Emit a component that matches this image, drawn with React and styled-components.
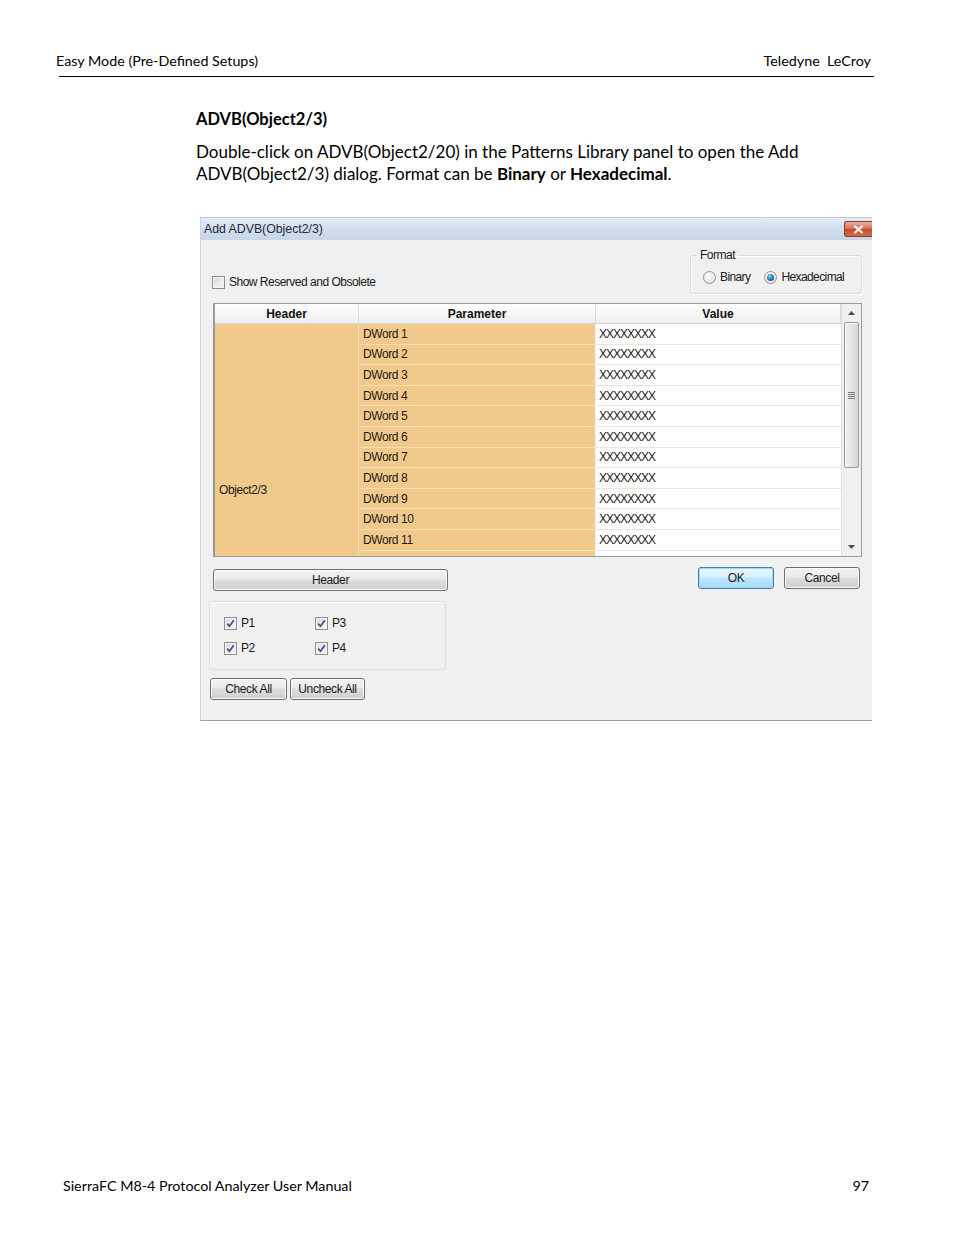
import React from "react";
import styled, { createGlobalStyle } from "styled-components";

const Global = createGlobalStyle`
  html, body { margin: 0; padding: 0; background: #fff; }
  body { font-family: "Lato", "Open Sans", sans-serif; color: #000; }
  * { box-sizing: border-box; }
`;

const Page = styled.div`
  width: 954px;
  min-height: 1235px;
  display: flex;
  flex-direction: column;
`;

const RunningHead = styled.div`
  display: flex;
  justify-content: space-between;
  margin: 52px 83px 0 56px;
  font-size: 14.3px;
  line-height: 18px;
`;

const Rule = styled.div`
  margin: 6px 80px 0 59px;
  border-top: 1px solid #000;
`;

const Content = styled.div`
  margin-left: 196px;
  display: flex;
  flex-direction: column;
`;

const Heading = styled.h2`
  margin: 32px 0 0;
  font-size: 16.5px;
  line-height: 20px;
  font-weight: 700;
`;

const Para = styled.p`
  margin: 12px 0 0;
  font-size: 17px;
  line-height: 22px;
  width: 690px;
`;

const Dialog = styled.div`
  margin: 32px 0 0 4px;
  width: 672px;
  background: #f0f0f0;
  border-bottom: 1px solid #a0a0a0;
  border-left: 1px solid #c8d4e2;
  font-family: "Liberation Sans", Arial, sans-serif;
  font-size: 12px;
  color: #1a1a1a;
`;

const TitleBar = styled.div`
  height: 23px;
  display: flex;
  align-items: flex-start;
  justify-content: space-between;
  background: linear-gradient(#e3ecf7, #cfdcec 60%, #c6d7ea);
  border-top: 1px solid #b9c9dc;
`;

const Title = styled.span`
  margin: 4px 0 0 3px;
  font-size: 12.3px;
  line-height: 14px;
  color: #1e2a3a;
`;

const CloseBtn = styled.div`
  margin-top: 3px;
  width: 28px;
  height: 16px;
  border: 1px solid #8d3a2b;
  border-right: none;
  border-radius: 3px 0 0 3px;
  background: linear-gradient(#eab1a2, #d7735c 45%, #c54b2e 55%, #d36b4c);
  display: flex;
  align-items: center;
  justify-content: center;
`;

const Body = styled.div`
  padding: 8px 10px 20px 11px;
  display: flex;
  flex-direction: column;
`;

const TopRow = styled.div`
  display: flex;
  justify-content: space-between;
  align-items: flex-end;
`;

const CheckLabel = styled.label`
  display: flex;
  align-items: center;
  gap: 4px;
  margin: 0 0 5px 0;
  line-height: 14px;
  letter-spacing: -0.5px;
`;

const Box = styled.span`
  width: 13px;
  height: 13px;
  border: 1px solid #8f8f8f;
  background: linear-gradient(135deg, #dcdcdc, #f6f6f6);
  box-shadow: inset 0 0 0 1px #f4f4f4;
  display: inline-flex;
  align-items: center;
  justify-content: center;
  flex: none;
`;

const Group = styled.fieldset`
  margin: 0;
  padding: 0 10px 9px 12px;
  width: 172px;
  border: 1px solid #d9dfe4;
  border-radius: 3px;
  box-shadow: inset 1px 1px 0 #fff, 1px 1px 0 #fff;
`;

const Legend = styled.legend`
  padding: 0 3px;
  margin-left: -6px;
  font-size: 12px;
  line-height: 14px;
  letter-spacing: -0.5px;
`;

const RadioRow = styled.div`
  display: flex;
  align-items: center;
  gap: 14px;
  margin-top: 8px;
`;

const RadioLabel = styled.label`
  display: flex;
  align-items: center;
  gap: 4px;
  line-height: 14px;
  letter-spacing: -0.6px;
`;

const Radio = styled.span`
  width: 13px;
  height: 13px;
  border-radius: 50%;
  border: 1px solid #939393;
  background: radial-gradient(circle at 40% 35%, #ffffff, #d8d8d8);
  display: inline-flex;
  align-items: center;
  justify-content: center;
  flex: none;
  &::after {
    content: "";
    width: 7px;
    height: 7px;
    border-radius: 50%;
    display: ${(p) => (p.$on ? "block" : "none")};
    background: radial-gradient(circle at 40% 35%, #8ad0f5, #1a6bb0 60%, #0d4f8c);
  }
`;

const Table = styled.div`
  margin: 9px 0 0 1px;
  height: 254px;
  border: 1px solid #9a9a9a;
  border-left-width: 2px;
  display: flex;
  background: #fff;
`;

const GridArea = styled.div`
  flex: 1;
  display: flex;
  flex-direction: column;
  overflow: hidden;
`;

const HeadRow = styled.div`
  height: 20px;
  display: grid;
  grid-template-columns: 144px 237px 1fr;
  background: linear-gradient(#ffffff, #f6f6f6 50%, #efefef);
  border-bottom: 1px solid #d5d5d5;
`;

const HeadCell = styled.div`
  display: flex;
  align-items: center;
  justify-content: center;
  font-weight: 700;
  font-size: 12px;
  color: #111;
  border-right: 1px solid #dadada;
`;

const TBody = styled.div`
  flex: 1;
  display: flex;
  overflow: hidden;
`;

const Merged = styled.div`
  width: 144px;
  flex: none;
  background: #f1ca8b;
  border-right: 1px solid #f7e0b9;
  padding: 159px 0 0 4px;
  line-height: 14px;
  letter-spacing: -0.4px;
`;

const Rows = styled.div`
  flex: 1;
  display: flex;
  flex-direction: column;
`;

const Row = styled.div`
  height: 20.6px;
  flex: none;
  display: grid;
  grid-template-columns: 237px 1fr;
`;

const ParamCell = styled.div`
  background: #f1ca8b;
  border-bottom: 1px solid #f7dfb5;
  border-right: 1px solid #f5f5f5;
  padding-left: 4px;
  display: flex;
  align-items: center;
  letter-spacing: -0.4px;
`;

const ValueCell = styled.div`
  border-bottom: 1px solid #e6e6e6;
  padding-left: 3px;
  display: flex;
  align-items: center;
  font-size: 12px;
  letter-spacing: -1px;
  color: #222;
`;

const ScrollBar = styled.div`
  width: 20px;
  flex: none;
  background: #f0f0f0;
  border-left: 1px solid #e2e2e2;
  display: flex;
  flex-direction: column;
  align-items: center;
  padding: 0 1px;
`;

const Arrow = styled.div`
  height: 18px;
  width: 100%;
  display: flex;
  align-items: center;
  justify-content: center;
`;

const Thumb = styled.div`
  width: 15px;
  height: 146px;
  border: 1px solid #9a9a9a;
  border-radius: 2px;
  background: linear-gradient(90deg, #f2f2f2, #e6e6e6 50%, #d6d6d6);
  box-shadow: inset 1px 1px 0 #fff;
  display: flex;
  align-items: center;
  justify-content: center;
`;

const Track = styled.div`
  flex: 1;
`;

const BottomRow = styled.div`
  display: flex;
  justify-content: space-between;
  align-items: flex-start;
  margin-top: 12px;
`;

const LeftCol = styled.div`
  display: flex;
  flex-direction: column;
`;

const Btn = styled.button`
  width: ${(p) => p.$w}px;
  height: 22px;
  padding: 0;
  border: 1px solid ${(p) => (p.$default ? "#3c7fb1" : "#707070")};
  border-radius: 3px;
  background: ${(p) =>
    p.$default
      ? "linear-gradient(#eaf6fd, #d9f0fc 45%, #bee6fd 50%, #a7d9f5)"
      : "linear-gradient(#f2f2f2, #ebebeb 45%, #dddddd 50%, #cfcfcf)"};
  box-shadow: inset 0 0 0 1px ${(p) => (p.$default ? "#9fdcf8" : "#fbfbfb")};
  font-family: "Liberation Sans", Arial, sans-serif;
  font-size: 12px;
  color: #1a1a1a;
  letter-spacing: -0.4px;
  margin: 0 0 0 ${(p) => p.$ml || 0}px;
`;

const RightBtns = styled.div`
  display: flex;
  gap: 10px;
  margin: -2px 2px 0 0;
`;

const PGroup = styled.div`
  margin: 10px 0 0 -3px;
  width: 237px;
  height: 69px;
  border: 1px solid #dcdfe2;
  border-radius: 3px;
  box-shadow: inset 1px 1px 0 #fbfbfb;
  display: grid;
  grid-template-columns: 91px auto;
  grid-auto-rows: 25px;
  align-content: start;
  padding: 11px 0 0 14px;
`;

const BtnRow = styled.div`
  display: flex;
  gap: 3px;
  margin: 8px 0 0 -2px;
`;

const Footer = styled.div`
  margin: auto 85px 40px 63px;
  display: flex;
  justify-content: space-between;
  font-size: 14.3px;
  line-height: 18px;
`;

const Check = ({ on }) => (
  <Box>
    {on && (
      <svg width="9" height="9" viewBox="0 0 9 9">
        <path d="M1.2 4.6 L3.5 7.2 L7.8 1.3" fill="none" stroke="#3a4f8f" strokeWidth="1.7" />
      </svg>
    )}
  </Box>
);

const CheckItem = ({ label }) => (
  <CheckLabel>
    <Check on />
    <span>{label}</span>
  </CheckLabel>
);

export default function App() {
  const rows = Array.from({ length: 12 }, (_, i) => i + 1);
  return (
    <>
      <Global />
      <Page>
        <RunningHead>
          <span>Easy Mode (Pre-Defined Setups)</span>
          <span>Teledyne&nbsp; LeCroy</span>
        </RunningHead>
        <Rule />
        <Content>
          <Heading>ADVB(Object2/3)</Heading>
          <Para>
            Double-click on ADVB(Object2/20) in the Patterns Library panel to open the Add
            <br />
            ADVB(Object2/3) dialog. Format can be <b>Binary</b> or <b>Hexadecimal</b>.
          </Para>
          <Dialog>
            <TitleBar>
              <Title>Add ADVB(Object2/3)</Title>
              <CloseBtn>
                <svg width="11" height="9" viewBox="0 0 11 9">
                  <path d="M1.5 1 L9.5 8 M9.5 1 L1.5 8" stroke="#fff" strokeWidth="2.2" />
                </svg>
              </CloseBtn>
            </TitleBar>
            <Body>
              <TopRow>
                <CheckLabel>
                  <Check />
                  <span>Show Reserved and Obsolete</span>
                </CheckLabel>
                <Group>
                  <Legend>Format</Legend>
                  <RadioRow>
                    <RadioLabel>
                      <Radio />
                      <span>Binary</span>
                    </RadioLabel>
                    <RadioLabel>
                      <Radio $on />
                      <span>Hexadecimal</span>
                    </RadioLabel>
                  </RadioRow>
                </Group>
              </TopRow>
              <Table>
                <GridArea>
                  <HeadRow>
                    <HeadCell>Header</HeadCell>
                    <HeadCell>Parameter</HeadCell>
                    <HeadCell>Value</HeadCell>
                  </HeadRow>
                  <TBody>
                    <Merged>Object2/3</Merged>
                    <Rows>
                      {rows.map((n) => (
                        <Row key={n}>
                          <ParamCell>{n < 12 ? `DWord ${n}` : ""}</ParamCell>
                          <ValueCell>{n < 12 ? "XXXXXXXX" : ""}</ValueCell>
                        </Row>
                      ))}
                    </Rows>
                  </TBody>
                </GridArea>
                <ScrollBar>
                  <Arrow>
                    <svg width="7" height="4" viewBox="0 0 7 4">
                      <path d="M0 4 L3.5 0 L7 4 Z" fill="#4d4d4d" />
                    </svg>
                  </Arrow>
                  <Thumb>
                    <svg width="7" height="7" viewBox="0 0 7 7">
                      <path d="M0 0.5 H7 M0 2.5 H7 M0 4.5 H7 M0 6.5 H7" stroke="#777" strokeWidth="1" />
                    </svg>
                  </Thumb>
                  <Track />
                  <Arrow>
                    <svg width="7" height="4" viewBox="0 0 7 4">
                      <path d="M0 0 L3.5 4 L7 0 Z" fill="#4d4d4d" />
                    </svg>
                  </Arrow>
                </ScrollBar>
              </Table>
              <BottomRow>
                <LeftCol>
                  <Btn $w={235} $ml={1}>Header</Btn>
                  <PGroup>
                    <CheckItem label="P1" />
                    <CheckItem label="P3" />
                    <CheckItem label="P2" />
                    <CheckItem label="P4" />
                  </PGroup>
                  <BtnRow>
                    <Btn $w={77}>Check All</Btn>
                    <Btn $w={75}>Uncheck All</Btn>
                  </BtnRow>
                </LeftCol>
                <RightBtns>
                  <Btn $w={76} $default>OK</Btn>
                  <Btn $w={76}>Cancel</Btn>
                </RightBtns>
              </BottomRow>
            </Body>
          </Dialog>
        </Content>
        <Footer>
          <span>SierraFC M8-4 Protocol Analyzer User Manual</span>
          <span>97</span>
        </Footer>
      </Page>
    </>
  );
}
